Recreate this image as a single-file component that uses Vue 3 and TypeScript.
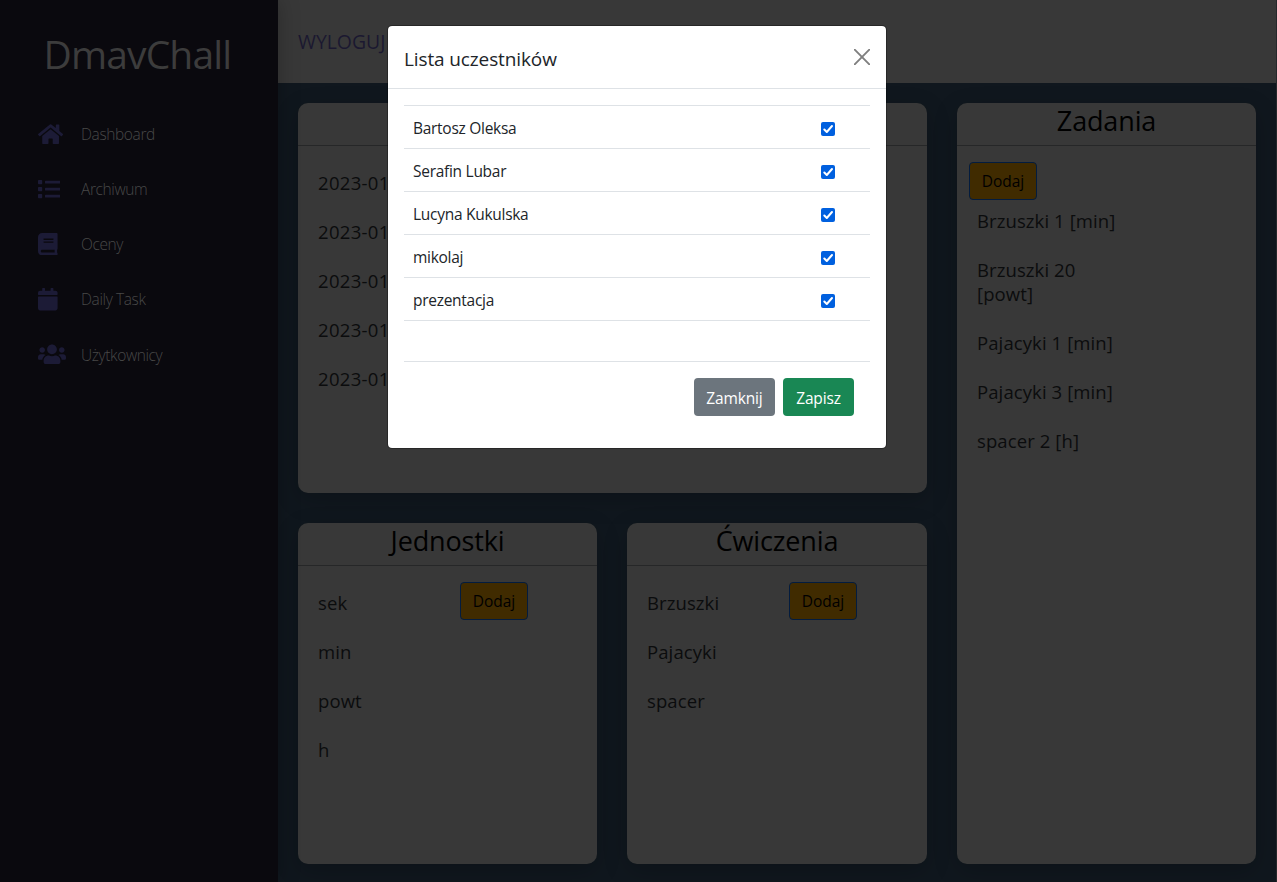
<script setup lang="ts">
interface NavItem { label: string; width: number; path: string }

const nav: NavItem[] = [
  { label: 'Dashboard', width: 576, path: 'M280.37 148.26L96 300.11V464a16 16 0 0 0 16 16l112.06-.29a16 16 0 0 0 15.92-16V368a16 16 0 0 1 16-16h64a16 16 0 0 1 16 16v95.64a16 16 0 0 0 16 16.05L464 480a16 16 0 0 0 16-16V300L295.67 148.26a12.19 12.19 0 0 0-15.3 0zM571.6 251.47L488 182.56V44.05a12 12 0 0 0-12-12h-56a12 12 0 0 0-12 12v72.61L318.47 43a48 48 0 0 0-61 0L4.34 251.47a12 12 0 0 0-1.6 16.9l25.5 31A12 12 0 0 0 45.15 301l235.22-193.74a12.19 12.19 0 0 1 15.3 0L530.9 301a12 12 0 0 0 16.9-1.6l25.5-31a12 12 0 0 0-1.7-16.93z' },
  { label: 'Archiwum', width: 512, path: 'M80 368H16a16 16 0 0 0-16 16v64a16 16 0 0 0 16 16h64a16 16 0 0 0 16-16v-64a16 16 0 0 0-16-16zm0-320H16A16 16 0 0 0 0 64v64a16 16 0 0 0 16 16h64a16 16 0 0 0 16-16V64a16 16 0 0 0-16-16zm0 160H16a16 16 0 0 0-16 16v64a16 16 0 0 0 16 16h64a16 16 0 0 0 16-16v-64a16 16 0 0 0-16-16zm416 176H176a16 16 0 0 0-16 16v32a16 16 0 0 0 16 16h320a16 16 0 0 0 16-16v-32a16 16 0 0 0-16-16zm0-320H176a16 16 0 0 0-16 16v32a16 16 0 0 0 16 16h320a16 16 0 0 0 16-16V80a16 16 0 0 0-16-16zm0 160H176a16 16 0 0 0-16 16v32a16 16 0 0 0 16 16h320a16 16 0 0 0 16-16v-32a16 16 0 0 0-16-16z' },
  { label: 'Oceny', width: 448, path: 'M448 360V24c0-13.3-10.7-24-24-24H96C43 0 0 43 0 96v320c0 53 43 96 96 96h328c13.3 0 24-10.7 24-24v-16c0-7.5-3.5-14.3-8.9-18.7-4.2-15.4-4.2-59.3 0-74.7 5.4-4.3 8.9-11.1 8.9-18.6zM128 134c0-3.3 2.7-6 6-6h212c3.3 0 6 2.7 6 6v20c0 3.3-2.7 6-6 6H134c-3.3 0-6-2.7-6-6v-20zm0 64c0-3.3 2.7-6 6-6h212c3.3 0 6 2.7 6 6v20c0 3.3-2.7 6-6 6H134c-3.3 0-6-2.7-6-6v-20zm253.4 250H96c-17.7 0-32-14.3-32-32 0-17.6 14.4-32 32-32h285.4c-1.9 17.1-1.9 46.9 0 64z' },
  { label: 'Daily Task', width: 448, path: 'M12 192h424c6.6 0 12 5.4 12 12v260c0 26.5-21.5 48-48 48H48c-26.5 0-48-21.5-48-48V204c0-6.6 5.4-12 12-12zm436-44v-36c0-26.5-21.5-48-48-48h-48V12c0-6.6-5.4-12-12-12h-40c-6.6 0-12 5.4-12 12v52H160V12c0-6.6-5.4-12-12-12h-40c-6.6 0-12 5.4-12 12v52H48C21.5 64 0 85.5 0 112v36c0 6.6 5.4 12 12 12h424c6.6 0 12-5.4 12-12z' },
  { label: 'Użytkownicy', width: 640, path: 'M96 224c35.3 0 64-28.7 64-64s-28.7-64-64-64-64 28.7-64 64 28.7 64 64 64zm448 0c35.3 0 64-28.7 64-64s-28.7-64-64-64-64 28.7-64 64 28.7 64 64 64zm32 32h-64c-17.6 0-33.5 7.1-45.1 18.6 40.3 22.1 68.9 62 75.1 109.4h66c17.7 0 32-14.3 32-32v-32c0-35.3-28.7-64-64-64zm-256 0c61.9 0 112-50.1 112-112S381.9 32 320 32 208 82.1 208 144s50.1 112 112 112zm76.8 32h-8.3c-20.8 10-43.9 16-68.5 16s-47.6-6-68.5-16h-8.3C179.6 288 128 339.6 128 403.2V432c0 26.5 21.5 48 48 48h288c26.5 0 48-21.5 48-48v-28.8c0-63.6-51.6-115.2-115.2-115.2zm-223.7-13.4C161.5 263.1 145.6 256 128 256H64c-35.3 0-64 28.7-64 64v32c0 17.7 14.3 32 32 32h65.9c6.3-47.4 34.9-87.3 75.2-109.4z' },
]
const dates: string[] = ['2023-01', '2023-01', '2023-01', '2023-01', '2023-01']
const units: string[] = ['sek', 'min', 'powt', 'h']
const exercises: string[] = ['Brzuszki', 'Pajacyki', 'spacer']
const tasks: string[] = ['Brzuszki 1 [min]', 'Brzuszki 20 [powt]', 'Pajacyki 1 [min]', 'Pajacyki 3 [min]', 'spacer 2 [h]']
const people: string[] = ['Bartosz Oleksa', 'Serafin Lubar', 'Lucyna Kukulska', 'mikolaj', 'prezentacja']
</script>

<template>
  <div class="app">
    <aside class="sidebar">
      <div class="logo">DmavChall</div>
      <nav class="nav">
        <a v-for="n in nav" :key="n.label" class="nav-item">
          <span class="nav-icon">
            <svg :viewBox="`0 0 ${n.width} 512`" height="22.4" :width="n.width * 22.4 / 512"><path :d="n.path" fill="currentColor" /></svg>
          </span>
          <span class="nav-label">{{ n.label }}</span>
        </a>
      </nav>
    </aside>
    <div class="content">
      <header class="topbar"><span>WYLOGUJ</span></header>
      <main class="grid">
        <section class="card wide">
          <h2></h2>
          <div class="body"><ul class="list dates"><li v-for="(d, i) in dates" :key="i">{{ d }}</li></ul></div>
        </section>
        <section class="card tasks">
          <h2>Zadania</h2>
          <div class="body stacked">
            <button class="add">Dodaj</button>
            <ul class="list"><li v-for="t in tasks" :key="t">{{ t }}</li></ul>
          </div>
        </section>
        <section class="card">
          <h2>Jednostki</h2>
          <div class="body">
            <ul class="list"><li v-for="u in units" :key="u">{{ u }}</li></ul>
            <button class="add">Dodaj</button>
          </div>
        </section>
        <section class="card">
          <h2>Ćwiczenia</h2>
          <div class="body">
            <ul class="list"><li v-for="e in exercises" :key="e">{{ e }}</li></ul>
            <button class="add">Dodaj</button>
          </div>
        </section>
      </main>
    </div>
    <div class="modal">
      <div class="modal-header">
        <span class="modal-title">Lista uczestników</span>
        <svg class="close" viewBox="0 0 16 16" width="16" height="16"><path d="M0.7 0.7L15.3 15.3M15.3 0.7L0.7 15.3" stroke="#7f7f7f" stroke-width="1.9" stroke-linecap="round" /></svg>
      </div>
      <div class="modal-body">
        <div class="table">
          <div v-for="p in people" :key="p" class="row">
            <span class="name">{{ p }}</span>
            <svg class="check" viewBox="0 0 14 14" width="14" height="14"><rect width="14" height="14" rx="2" fill="#0060df" /><path d="M3.3 7.5L5.8 10L11 4" fill="none" stroke="#fff" stroke-width="2" stroke-linecap="round" stroke-linejoin="round" /></svg>
          </div>
        </div>
        <div class="footer">
          <button class="btn grey">Zamknij</button>
          <button class="btn green">Zapisz</button>
        </div>
      </div>
    </div>
  </div>
</template>

<style>
body { margin: 0; overflow: hidden; }
</style>

<style scoped>
* { box-sizing: border-box; }
.app { position: relative; display: flex; width: 1277px; height: 882px; overflow: hidden; background: #10171e; font-family: "Open Sans", "Noto Sans", sans-serif; }
.sidebar { position: relative; z-index: 1; width: 278px; height: 882px; background: #0a090e; box-shadow: 0 0 20px rgba(0, 0, 0, .25); flex: none; }
.logo { height: 106.4px; padding: 24px 0 0 43.5px; font-size: 39px; line-height: 60px; font-weight: 400; letter-spacing: -0.85px; color: #3c3c3c; white-space: nowrap; }
.nav { display: flex; flex-direction: column; }
.nav-item { display: flex; align-items: center; height: 55.15px; padding-left: 38px; }
.nav-icon { width: 43px; display: flex; color: #1c1b36; }
.nav-label { font-size: 15.5px; line-height: 24px; font-weight: 300; letter-spacing: -0.38px; color: #484848; }
.content { flex: 1; display: flex; flex-direction: column; border-right: 1px solid #25282b; }
.topbar { height: 83px; padding-left: 20px; background: #383838; font-size: 19.4px; line-height: 84px; color: #1b1830; }
.grid { display: grid; grid-template-columns: 299px 300px 299px; grid-template-rows: 390px 341px; gap: 30px; padding: 20px; }
.card { background: #383838; border-radius: 10px; box-shadow: 0 7px 25px rgba(0, 0, 0, .2); overflow: hidden; }
.wide { grid-column: span 2; }
.tasks { grid-column: 3; grid-row: 1 / span 2; }
h2 { margin: 0; height: 43px; border-bottom: 1px solid #262728; text-align: center; font-size: 27px; line-height: 35px; font-weight: 400; letter-spacing: -0.15px; color: #000; }
.body { display: grid; grid-template-columns: 150px 1fr; padding: 16px 12px; align-items: start; }
.stacked { grid-template-columns: 150px; }
.list { list-style: none; margin: 0; padding: 9px 0 0 8px; font-size: 18.5px; line-height: 24.4px; letter-spacing: 0.1px; color: #0b0c0d; }
.list li { margin-bottom: 24.5px; }
.list.dates { letter-spacing: 0.3px; }
.add { justify-self: start; width: 68px; height: 38px; padding: 0; border: 1px solid #031c3f; border-radius: 4px; background: #402b00; color: #000; font: 400 15.5px/24px "Open Sans", sans-serif; }
.modal { position: absolute; z-index: 2; left: 387px; top: 25px; width: 500px; height: 424px; background: #fff; background-clip: padding-box; border: 1px solid rgba(0, 0, 0, .3); border-radius: 5px; color: #212529; }
.modal-header { display: flex; justify-content: space-between; height: 63px; padding: 0 16px; border-bottom: 1px solid #dee2e6; align-items: center; }
.modal-title { font-size: 19px; line-height: 30px; padding-top: 3px; letter-spacing: -0.12px; }
.modal-body { padding: 16px; }
.table { border-top: 1px solid #dee2e6; }
.row { display: flex; justify-content: space-between; align-items: center; height: 43px; padding: 4px 35px 0 9px; border-bottom: 1px solid #dee2e6; font-size: 15.5px; }
.name { letter-spacing: -0.28px; padding-bottom: 2px; }
.footer { display: flex; justify-content: flex-end; gap: 8px; margin-top: 40px; padding: 16px; border-top: 1px solid #dee2e6; }
.btn { height: 38px; padding: 2px 0 0; border: 0; border-radius: 4px; color: #fff; font: 400 15.5px/24px "Open Sans", sans-serif; letter-spacing: -0.15px; }
.grey { width: 81px; background: #6c757d; }
.green { width: 71px; background: #198754; }
</style>
